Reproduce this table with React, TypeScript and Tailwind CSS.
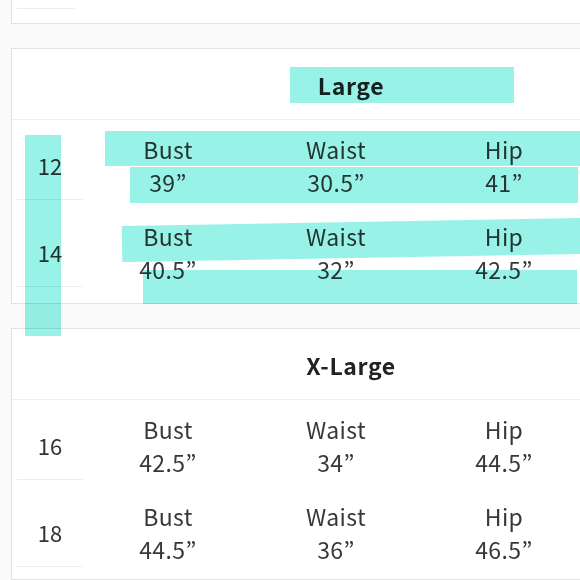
import React from 'react';

type Row = { size: string; bust: string; waist: string; hip: string };

const font = { fontFamily: '"Noto Sans CJK JP", "Noto Sans", sans-serif' };

const SizeCard: React.FC<{ title: string; rows: Row[]; className?: string }> = ({ title, rows, className }) => (
  <div className={`w-[680px] border border-[#e2e2e2] bg-white ${className ?? ''}`}>
    <div className="flex h-[71px] items-center justify-center pt-[2px] border-b border-[#efefef]">
      <span className="text-[23px] font-semibold tracking-[0.6px] text-[#222]">{title}</span>
    </div>
    {rows.map((row, i) => (
      <div key={row.size} className={`flex items-end ${i === 0 ? 'h-[80px]' : 'h-[87px]'}`}>
        <div className="ml-[5px] flex h-full w-[66px] items-end border-b border-[#ececec]">
          <div className="flex h-[66px] w-full items-center justify-center pb-[2px] text-[22px] text-[#333]">
            {row.size}
          </div>
        </div>
        {[
          ['Bust', row.bust],
          ['Waist', row.waist],
          ['Hip', row.hip],
        ].map(([label, value]) => (
          <div
            key={label}
            className="ml-[2px] flex w-[166px] flex-col items-center pb-[1px] text-[23px] leading-[33px] tracking-[0.4px] text-[#383838]"
          >
            <span>{label}</span>
            <span>{value}</span>
          </div>
        ))}
      </div>
    ))}
  </div>
);

export default function App() {
  const large: Row[] = [
    { size: '12', bust: '39”', waist: '30.5”', hip: '41”' },
    { size: '14', bust: '40.5”', waist: '32”', hip: '42.5”' },
  ];
  const xlarge: Row[] = [
    { size: '16', bust: '42.5”', waist: '34”', hip: '44.5”' },
    { size: '18', bust: '44.5”', waist: '36”', hip: '46.5”' },
  ];

  return (
    <div className="relative h-[580px] w-[580px] overflow-hidden bg-[#fafafa]" style={font}>
      <div className="ml-[11px] h-[24px] w-[680px] border-l border-b border-[#e2e2e2] bg-white pt-[8px]">
        <div className="ml-[5px] w-[58px] border-t border-[#ececec]" />
      </div>
      <SizeCard title="Large" rows={large} className="ml-[11px] mt-[24px] h-[256px]" />
      <SizeCard title="X-Large" rows={xlarge} className="ml-[11px] mt-[24px] h-[252px]" />

      {/* marker highlights drawn over the chart */}
      <div className="pointer-events-none absolute inset-0 mix-blend-multiply">
        <div className="absolute left-[290px] top-[67px] h-[36px] w-[224px] bg-[#98f2e7]" />
        <div className="absolute left-[25px] top-[135px] h-[201px] w-[36px] bg-[#98f2e7]" />
        <div className="absolute left-[105px] top-[131px] h-[35px] w-[480px] bg-[#98f2e7]" />
        <div className="absolute left-[130px] top-[167px] h-[36px] w-[448px] bg-[#98f2e7]" />
        <div className="absolute left-[122px] top-[222px] h-[36px] w-[470px] -rotate-1 bg-[#98f2e7]" />
        <div className="absolute left-[143px] top-[270px] h-[34px] w-[434px] bg-[#98f2e7]" />
      </div>
    </div>
  );
}
